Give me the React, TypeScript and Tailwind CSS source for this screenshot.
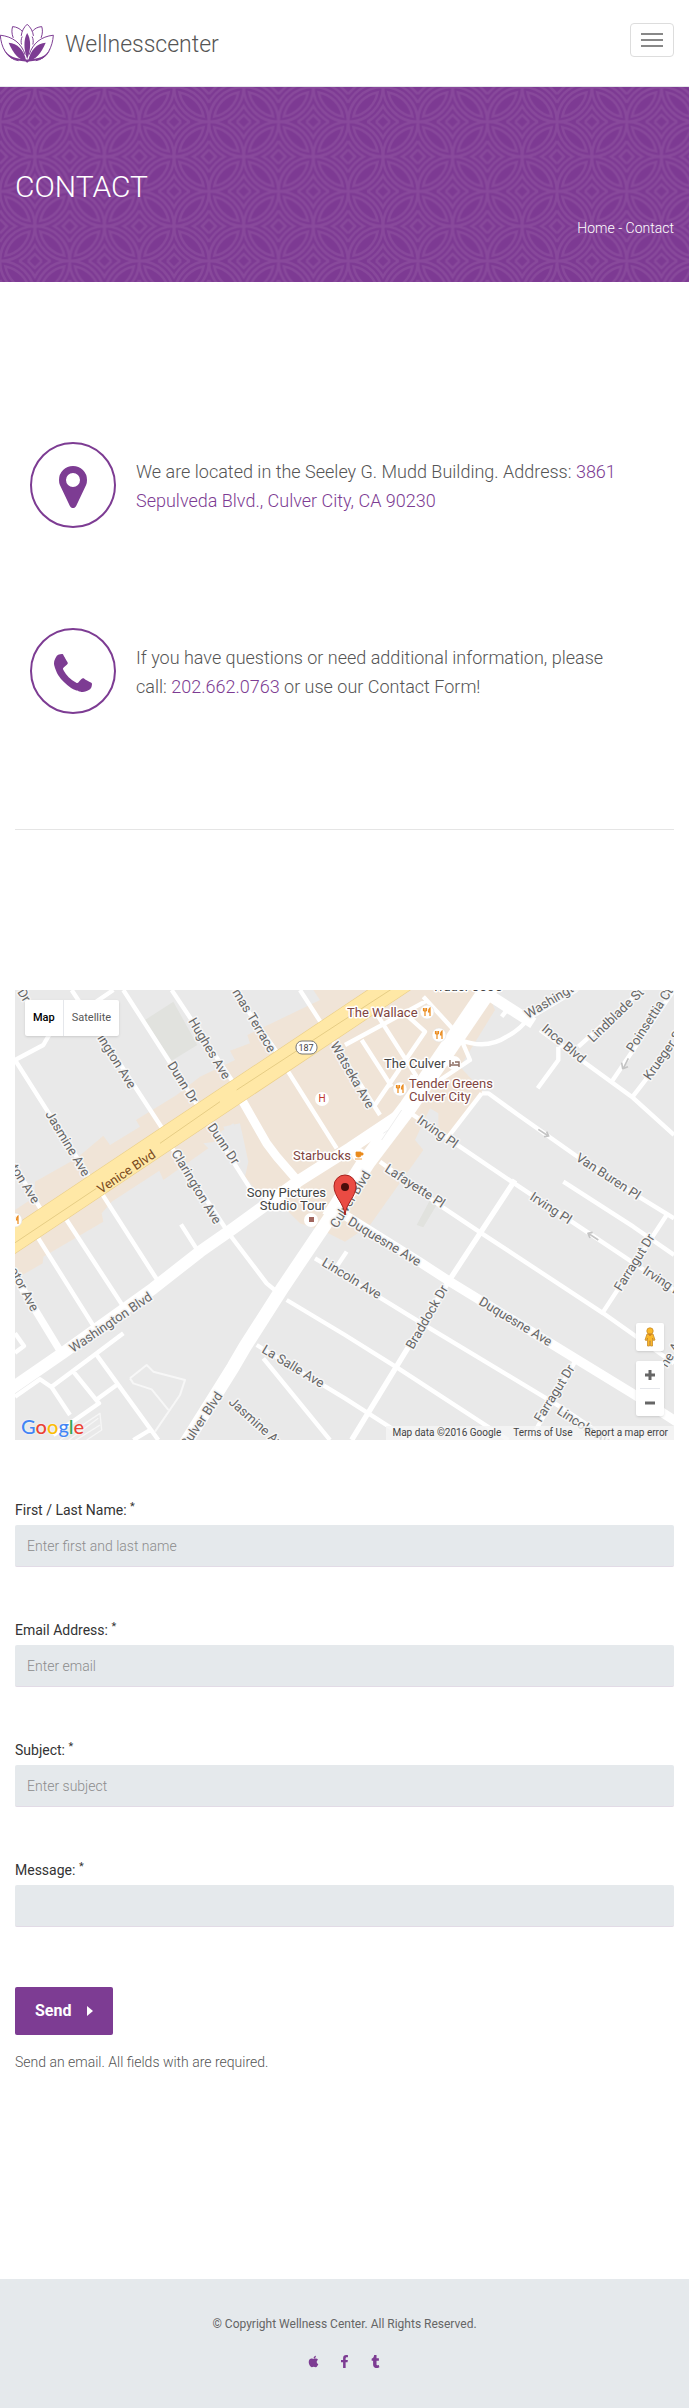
import { FaApple, FaFacebookF, FaTumblr } from 'react-icons/fa'

const LotusLogo = () => (
  <svg viewBox="0 68 163 119" className="w-[54px] h-[40px]" fill="none" aria-hidden="true">
    <g stroke="#7d3c93" strokeWidth="3">
      <path d="M64 106C66 90 73 79 82 71C91 79 99 90 101 106" />
      <path d="M40 112C35 99 35 88 38 78C50 79 60 84 67 92" />
      <path d="M124 112C129 99 129 88 126 78C114 79 104 84 98 92" />
      <path d="M76 163C65 128 38 108 1 104C3 138 20 176 56 181" />
      <path d="M88 163C99 128 124 108 161 104C159 138 142 176 108 181" />
      <path d="M67 108C63 116 63 126 65 132M97 108C101 116 101 126 99 132" />
    </g>
    <g fill="#7d3c93">
      <path d="M82 97C71 116 71 146 82 176C94 146 94 116 82 97Z" />
      <path d="M26 127C52 128 73 149 79 182C57 179 41 161 26 127Z" />
      <path d="M138 127C112 128 92 149 85 182C107 179 123 161 138 127Z" />
      <path d="M10 142C24 171 50 176 82 177C114 176 140 171 154 142C141 175 121 182 87 183L82 187L77 183C43 182 23 175 10 142Z" />
    </g>
  </svg>
)

const BannerPattern = () => (
  <svg className="absolute inset-0 w-full h-full" aria-hidden="true">
    <defs>
      <pattern
        id="petals"
        width="100"
        height="100"
        patternUnits="userSpaceOnUse"
        patternTransform="translate(0 34.8) scale(.6963)"
      >
        <g fill="none" stroke="#88499b" strokeWidth="3.6">
          {[0, 90, 180, 270].map(angle => (
            <g key={angle} transform={`rotate(${angle} 50 50)`}>
              <path d="M0 0A50 50 0 0 1 50 50A50 50 0 0 1 0 0Z" />
              <path d="M7.700 7.700A43 43 0 0 1 42.300 42.300A43 43 0 0 1 7.700 7.700Z" />
              <path d="M0 27.400A57 57 0 0 0 22.600 50A57 57 0 0 0 0 72.600" />
              <path d="M0 40L10 50L0 60" />
            </g>
          ))}
        </g>
      </pattern>
    </defs>
    <rect width="100%" height="100%" fill="url(#petals)" />
  </svg>
)

const PinIcon = () => (
  <svg viewBox="0 128 1024 1536" className="w-7 h-[42px]" fill="currentColor" aria-hidden="true">
    <path d="M768 640q0 -106 -75 -181t-181 -75t-181 75t-75 181t75 181t181 75t181 -75t75 -181zM1024 640q0 109 -33 179l-364 774q-16 33 -47.5 52t-67.5 19t-67.5 -19t-46.5 -52l-365 -774q-33 -70 -33 -179q0 -212 150 -362t362 -150t362 150t150 362z" />
  </svg>
)

const PhoneIcon = () => (
  <svg viewBox="0 128 1408 1408" className="w-[38px] h-[38px]" fill="currentColor" aria-hidden="true">
    <path d="M1408 1240q0 27 -10 70.5t-21 68.5q-21 50 -122 106q-94 51 -186 51q-27 0 -52.5 -3.5t-57.5 -12.5t-47.5 -14.5t-55.5 -20.5t-49 -18q-98 -35 -175 -83q-128 -79 -264.5 -215.5t-215.5 -264.5q-48 -77 -83 -175q-3 -9 -18 -49t-20.5 -55.5t-14.5 -47.5t-12.5 -57.5t-3.5 -52.5q0 -92 51 -186q56 -101 106 -122q25 -11 68.5 -21t70.5 -10q14 0 21 3q18 6 53 76q11 19 30 54t35 63.5t31 53.5q3 4 17.5 25t21.5 35.5t7 28.5q0 20 -28.5 50t-62 55t-62 53t-28.5 46q0 9 5 22.5t8.500 20.5t14 24t11.500 19q76 137 174 235t235 174q2 1 19 11.500t24 14t20.500 8.500t22.500 5q18 0 46 -28.500t53 -62t55 -62t50 -28.500q14 0 28.500 7t35.500 21.500t25 17.500q25 15 53.500 31t63.500 35t54 30q70 35 76 53q3 7 3 21z" />
  </svg>
)

// x, y of the baseline start, angle, label
const streets: [number, number, number, string][] = [
  [2, 2, 58, 'Dr'],
  [173, 31, 59, 'Hughes Ave'],
  [152, 75, 58, 'Dunn Dr'],
  [192, 137, 56, 'Dunn Dr'],
  [156, 163, 59, 'Clarington Ave'],
  [82, 48, 58, 'ington Ave'],
  [30, 124, 59, 'Jasmine Ave'],
  [-5, 178, 58, 'ton Ave'],
  [217, 2, 59, 'mas Terrace'],
  [315, 55, 60, 'Watseka Ave'],
  [-6, 280, 62, 'otor Ave'],
  [172, 459, -56, 'Culver Blvd'],
  [322, 239, -58, 'Culver Blvd'],
  [213, 413, 42, 'Jasmine Ave'],
  [246, 362, 31, 'La Salle Ave'],
  [306, 275, 31, 'Lincoln Ave'],
  [332, 234, 31, 'Duquesne Ave'],
  [463, 314, 31, 'Duquesne Ave'],
  [398, 360, -60, 'Braddock Dr'],
  [606, 302, -58, 'Farragut Dr'],
  [526, 433, -58, 'Farragut Dr'],
  [541, 423, 33, 'Lincoln Ave'],
  [627, 283, 33, 'Irving Pl'],
  [514, 209, 33, 'Irving Pl'],
  [401, 132, 35, 'Irving Pl'],
  [369, 181, 33, 'Lafayette Pl'],
  [560, 170, 33, 'Van Buren Pl'],
  [526, 40, 40, 'Ince Blvd'],
  [513, 29, -31, 'Washington'],
  [578, 53, -44, 'Lindblade St'],
  [618, 63, -57, 'Poinsettia Ct'],
  [635, 91, -55, 'Krueger St'],
  [652, 378, -58, 'ne Ave'],
]

const minorRoads =
  'M45 240L280 610M305 640L475 905M45 240L130 195L150 160L340 30M215 30L490 450M510 495L690 765L800 910L830 935M370 30L595 380M620 420L760 640M515 30L705 315M700 30L830 215M855 260L1010 505M900 30L990 170L1140 405M45 560L130 700M115 775L285 1045M200 720L370 980M45 1060L72 1098L45 1118M543 733L595 815M370 1060L290 1120L155 1220M45 1250L120 1198L155 1222L210 1305M220 1175L297 1270L160 1365M350 1215L285 1262M290 1125L475 1380M400 1380L450 1350M770 1095L1035 1255L1230 1380M790 1135L990 1380M860 960L1035 1065L1195 1165L1525 1380M945 835L1135 950L1290 1045L1680 1280L1830 1380M1140 545L1325 680L1445 760L1810 1000L2022 1150M1225 395L1535 605L1715 725L2022 930M1445 340L1465 340L1555 405L1725 525L1900 640L2022 715M1690 605L1900 740L2022 825M1620 150L1895 350L2022 465M1445 340L1345 470M2000 705L1810 995M1725 1145L1590 1380M1040 815L1010 860M1675 200L1675 240L1613 325M1505 110L1525 85M1380 180Q1460 210 1520 170Q1560 150 1585 115M1835 305L2022 30M1898 350L2022 190M1735 200L1925 30M1595 110L1730 30M1035 195L1275 65M1085 180L1175 320M1135 110L1250 290M1225 110L1275 155L1125 375M1270 50L1380 170L1410 240L1305 310L1230 290'

const ForkBadge = ({ x, y }: { x: number; y: number }) => (
  <g transform={`translate(${x} ${y})`}>
    <circle r="7" fill="#fff" stroke="#ddd" strokeWidth=".5" />
    <path
      d="M-3.500 -4V-1M-2 -4V-1M-.5 -4V-1M-3.500 -1H-.5M-2 -1V4M3 4V-4Q1.500 -3 1.500 0H3"
      fill="none"
      stroke="#ea8a1c"
      strokeWidth="1.200"
    />
  </g>
)

const CityMap = () => (
  <svg
    viewBox="0 0 659 450"
    preserveAspectRatio="xMidYMid slice"
    className="block w-full h-full font-['Roboto']"
    role="img"
    aria-label="Street map of Culver City"
  >
    <rect width="659" height="450" fill="#e9e9e9" />
    <g transform="translate(-15 -10) scale(.33333)" fill="none" strokeLinejoin="round">
      <path
        fill="#f0e4d7"
        d="M45 690L105 650V605L230 535L310 467L330 495L420 440L408 420L530 345L600 290L705 240L690 212L750 190L742 165L960 60L940 30H1460L1485 90L1380 260L1450 335L1350 475L1315 450V400L1290 385L1245 480L1270 510L1110 735L1035 785L985 760L900 730L860 690L800 670L735 590L745 545L720 430L670 440L690 480L610 490L625 505L490 600L478 572L335 665L305 700L310 725L130 830L128 850L45 898Z"
      />
      <path fill="#e1e2de" d="M435 120L520 65L592 195L515 242ZM1250 735L1290 660L1310 675L1270 742Z" />
      <path fill="#e9e9e9" d="M640 470L700 430L718 465L705 480L745 545L720 590L690 570Z" />
      <path d={minorRoads} stroke="#fff" strokeWidth="13" />
      <path d="M45 890L185 1120" stroke="#fff" strokeWidth="22" />
      <path d="M720 350L800 490L830 530L895 605" stroke="#fff" strokeWidth="26" />
      <path d="M1545 600L1345 905L1055 1380" stroke="#fff" strokeWidth="16" />
      <path d="M25 1232L190 1118L460 925L600 815L700 745L790 680L900 600L1050 505L1230 385" stroke="#fff" strokeWidth="36" />
      <path d="M1475 50L1600 130" stroke="#fff" strokeWidth="34" />
      <path d="M1025 700L1265 850L1350 905L1905 1245L2040 1332" stroke="#fff" strokeWidth="28" />
      <path d="M550 1400L700 1160L735 1100L850 920L1005 690" stroke="#fff" strokeWidth="40" />
      <path d="M990 715L1100 545L1225 380L1470 20" stroke="#fff" strokeWidth="54" />
      <path d="M1145 480L1205 390M1150 460L1165 450" stroke="#eee" strokeWidth="3" />
      <path d="M20 795L1035 118L1260 -32" stroke="#ecd08a" strokeWidth="73" />
      <path d="M20 795L1035 118L1260 -32" stroke="#ffe8a6" strokeWidth="69" />
      <path d="M20 805L300 618M480 490L660 365M710 330L1035 118L1260 -28" stroke="#e6cd85" strokeWidth="3" />
      <path
        d="M390 1195L440 1155L460 1175L555 1200L540 1245L465 1355M390 1195L400 1210L455 1228L505 1290"
        stroke="#f7f7f7"
        strokeWidth="6"
      />
      <path d="M180 1380L300 1300L305 1350L260 1380M200 1385L295 1315M220 1385L300 1335" stroke="#f6f6f6" strokeWidth="4" />
      <g stroke="#c4c4c4" strokeWidth="5">
        <path d="M1615 448L1645 468M1632 470L1646 468L1640 455" />
        <path d="M1885 235L1870 265M1865 248L1868 266L1884 260" />
        <path d="M1795 780L1765 760M1778 757L1764 760L1770 774" />
      </g>
    </g>

    <g fill="#666" fontSize="13" stroke="#f5f5f5" strokeWidth="3" paintOrder="stroke" strokeLinejoin="round">
      {streets.map(([x, y, angle, name]) => (
        <text key={`${x}-${y}`} transform={`translate(${x} ${y}) rotate(${angle})`}>
          {name}
        </text>
      ))}
      <text transform="translate(58 363) rotate(-34)">Washington Blvd</text>
      <text transform="translate(86 204) rotate(-34)" fill="#7a4a1c" stroke="#ffe8a6">
        Venice Blvd
      </text>
    </g>

    <g fontSize="13" stroke="#fff" strokeWidth="3" paintOrder="stroke" strokeLinejoin="round">
      <g fill="#7f453f">
        <text x="332" y="27">The Wallace</text>
        <text x="394" y="98">Tender Greens</text>
        <text x="394" y="111">Culver City</text>
        <text x="278" y="170">Starbucks</text>
      </g>
      <g fill="#444">
        <text x="417" y="1">Trader Joe&apos;s</text>
        <text x="369" y="78">The Culver</text>
        <text x="311" y="207" textAnchor="end">Sony Pictures</text>
        <text x="311" y="220" textAnchor="end">Studio Tour</text>
      </g>
    </g>

    <rect x="281" y="51" width="21" height="13" rx="6" fill="#fff" stroke="#777" />
    <text x="291" y="61" textAnchor="middle" fontSize="9" fill="#444">187</text>
    <circle cx="307" cy="109" r="7" fill="#fff" />
    <text x="307" y="112" textAnchor="middle" fontSize="10" fill="#c0392b">H</text>
    <ForkBadge x={412} y={22} />
    <ForkBadge x={424} y={45} />
    <ForkBadge x={385} y={99} />
    <ForkBadge x={0} y={230} />
    <circle cx="344" cy="165" r="7" fill="#fff" />
    <path d="M341 162H346V165Q346 167 344 167H343Q341 167 341 165ZM346 163H348V165H346M340 169H347" fill="#ea8a1c" stroke="#ea8a1c" strokeWidth=".8" />
    <circle cx="439" cy="73" r="7" fill="#fff" />
    <path d="M435 70V77M435 75H444V77M437 73H439M440 72H444V75" fill="none" stroke="#8d6e63" strokeWidth="1.400" />
    <circle cx="296" cy="230" r="7" fill="#fff" />
    <rect x="294" y="227" width="5" height="5" fill="#a1665e" />

    <path
      d="M330 225C329 213 319 207 319 196A11 11 0 0 1 341 196C341 207 331 213 330 225Z"
      fill="#ea4b43"
      stroke="#a8211d"
    />
    <circle cx="330" cy="197" r="4" fill="#4a0d0a" />
  </svg>
)

const MapPanel = () => (
  <div className="relative h-[450px] overflow-hidden">
    <CityMap />
    <div className="absolute top-[10px] left-[10px] flex h-9 rounded-xs bg-white text-[11px] shadow">
      <button type="button" className="px-2 font-medium text-black">
        Map
      </button>
      <button type="button" className="px-2 border-l border-gray-200 text-[#565656]">
        Satellite
      </button>
    </div>
    <div className="absolute right-[10px] bottom-6 flex flex-col gap-[10px]">
      <button type="button" aria-label="Street View" className="flex justify-center items-center w-7 h-7 rounded-xs bg-white shadow">
        <svg viewBox="0 0 12 20" className="w-3 h-5" fill="#fbb829" stroke="#c88a28" strokeWidth=".8">
          <path d="M3 7H9L11 13L9.500 13.500L8.500 11V19H6.500V14H5.500V19H3.500V11L2.500 13.500L1 13Z" />
          <circle cx="6" cy="4" r="3.200" />
          <path d="M4.500 7L6 9L7.500 7Z" fill="#e0701c" />
        </svg>
      </button>
      <div className="flex flex-col w-7 rounded-xs bg-white shadow">
        <button type="button" aria-label="Zoom in" className="flex justify-center items-center h-[27px]">
          <svg viewBox="0 0 10 10" className="w-[10px] h-[10px]" stroke="#666" strokeWidth="3">
            <path d="M0 5H10M5 0V10" />
          </svg>
        </button>
        <div className="h-px mx-1 bg-gray-200" />
        <button type="button" aria-label="Zoom out" className="flex justify-center items-center h-[27px]">
          <svg viewBox="0 0 10 10" className="w-[10px] h-[10px]" stroke="#666" strokeWidth="3">
            <path d="M0 5H10" />
          </svg>
        </button>
      </div>
    </div>
    <a
      href="#google"
      className="absolute bottom-[2px] left-[6px] flex font-['Lato'] text-xl leading-6 font-medium text-[#4285f4] [text-shadow:0_0_2px_#fff]"
    >
      <span>G</span>
      <span className="text-[#ea4335]">o</span>
      <span className="text-[#fbbc05]">o</span>
      <span>g</span>
      <span className="text-[#34a853]">l</span>
      <span className="text-[#ea4335]">e</span>
    </a>
    <div className="absolute right-0 bottom-0 flex h-[14px] text-[10px] leading-[14px] text-[#444] bg-[#f5f5f5]/80">
      <span className="px-[6px]">Map data ©2016 Google</span>
      <a href="#terms" className="px-[6px]">
        Terms of Use
      </a>
      <a href="#report" className="px-[6px]">
        Report a map error
      </a>
    </div>
  </div>
)

const fields = [
  { id: 'name', label: 'First / Last Name:', placeholder: 'Enter first and last name' },
  { id: 'email', label: 'Email Address:', placeholder: 'Enter email' },
  { id: 'subject', label: 'Subject:', placeholder: 'Enter subject' },
  { id: 'message', label: 'Message:', placeholder: '' },
]

const ContactForm = () => (
  <form className="pt-[60px]" onSubmit={e => e.preventDefault()}>
    <div className="flex flex-col gap-[53px]">
      {fields.map(({ id, label, placeholder }) => (
        <div key={id}>
          <label htmlFor={id} className="block h-[25px] text-sm text-[#333]">
            {label} <sup className="text-[11px]">*</sup>
          </label>
          <input
            id={id}
            type="text"
            placeholder={placeholder}
            className="block w-full h-[42px] px-3 rounded-xs bg-[#e5e9ec] border-b border-[#e2dbe6] text-sm font-light placeholder:text-[#8c8c8c]"
          />
        </div>
      ))}
    </div>
    <button
      type="submit"
      className="flex items-center gap-4 h-12 mt-[60px] px-5 rounded-xs bg-[#7d3c93] text-base font-bold text-white"
    >
      Send
      <svg viewBox="0 0 6 10" className="w-[6px] h-[10px]" fill="currentColor" aria-hidden="true">
        <path d="M0 0L6 5L0 10Z" />
      </svg>
    </button>
    <p className="mt-[17px] text-sm font-light text-[#555]">Send an email. All fields with are required.</p>
  </form>
)

const App = () => {
  return (
    <div className="bg-white font-['Roboto',sans-serif] text-[#555]">
      <header className="flex justify-between items-start h-[87px] pt-[23px] pr-[15px] border-b border-gray-200">
        <a href="#home" className="flex items-center gap-[11px]">
          <LotusLogo />
          <span className="pt-[3px] text-[23px] leading-8 font-light">Wellnesscenter</span>
        </a>
        <button
          type="button"
          aria-label="Toggle navigation"
          className="flex flex-col justify-center items-center gap-1 w-11 h-[34px] rounded border border-[#ddd]"
        >
          <span className="w-[22px] h-[2px] bg-[#888]" />
          <span className="w-[22px] h-[2px] bg-[#888]" />
          <span className="w-[22px] h-[2px] bg-[#888]" />
        </button>
      </header>

      <section className="relative h-[195px] px-[15px] pt-20 bg-[#7d3a93] text-white">
        <BannerPattern />
        <div className="relative">
          <h1 className="text-[30px] leading-10 font-light">CONTACT</h1>
          <nav className="mt-[11px] text-right text-sm font-light">
            <a href="#home">Home</a> - Contact
          </nav>
        </div>
      </section>

      <main className="px-[15px]">
        <div className="flex flex-col gap-[100px] pt-40 pb-[115px] pl-[15px] pr-[45px] border-b border-[#e5e5e5]">
          <div className="flex items-start gap-5">
            <div className="flex justify-center items-center shrink-0 w-[86px] h-[86px] pt-1 rounded-full border-2 border-[#7d3c93] text-[#7d3c93]">
              <PinIcon />
            </div>
            <p className="pt-[15px] text-lg leading-[29px] font-light">
              We are located in the Seeley G. Mudd Building. Address:{' '}
              <a href="#map" className="text-[#7d3c93]">
                3861 Sepulveda Blvd., Culver City, CA 90230
              </a>
            </p>
          </div>
          <div className="flex items-start gap-5">
            <div className="flex justify-center items-center shrink-0 w-[86px] h-[86px] pt-1 rounded-full border-2 border-[#7d3c93] text-[#7d3c93]">
              <PhoneIcon />
            </div>
            <p className="pt-[15px] text-lg leading-[29px] font-light">
              If you have questions or need additional information, please call:{' '}
              <a href="tel:2026620763" className="text-[#7d3c93]">
                202.662.0763
              </a>{' '}
              or use our Contact Form!
            </p>
          </div>
        </div>

        <div id="map" className="pt-40">
          <MapPanel />
        </div>
        <ContactForm />
      </main>

      <footer className="mt-[207px] pt-[35px] pb-10 bg-[#e5e9ec] text-center">
        <p className="text-xs leading-5 text-[#666]">© Copyright Wellness Center. All Rights Reserved.</p>
        <div className="flex justify-center gap-[18px] mt-[21px] text-[13px] text-[#7d3c93]">
          <a href="#apple" aria-label="Apple">
            <FaApple />
          </a>
          <a href="#facebook" aria-label="Facebook">
            <FaFacebookF />
          </a>
          <a href="#tumblr" aria-label="Tumblr">
            <FaTumblr />
          </a>
        </div>
      </footer>
    </div>
  )
}

export default App
